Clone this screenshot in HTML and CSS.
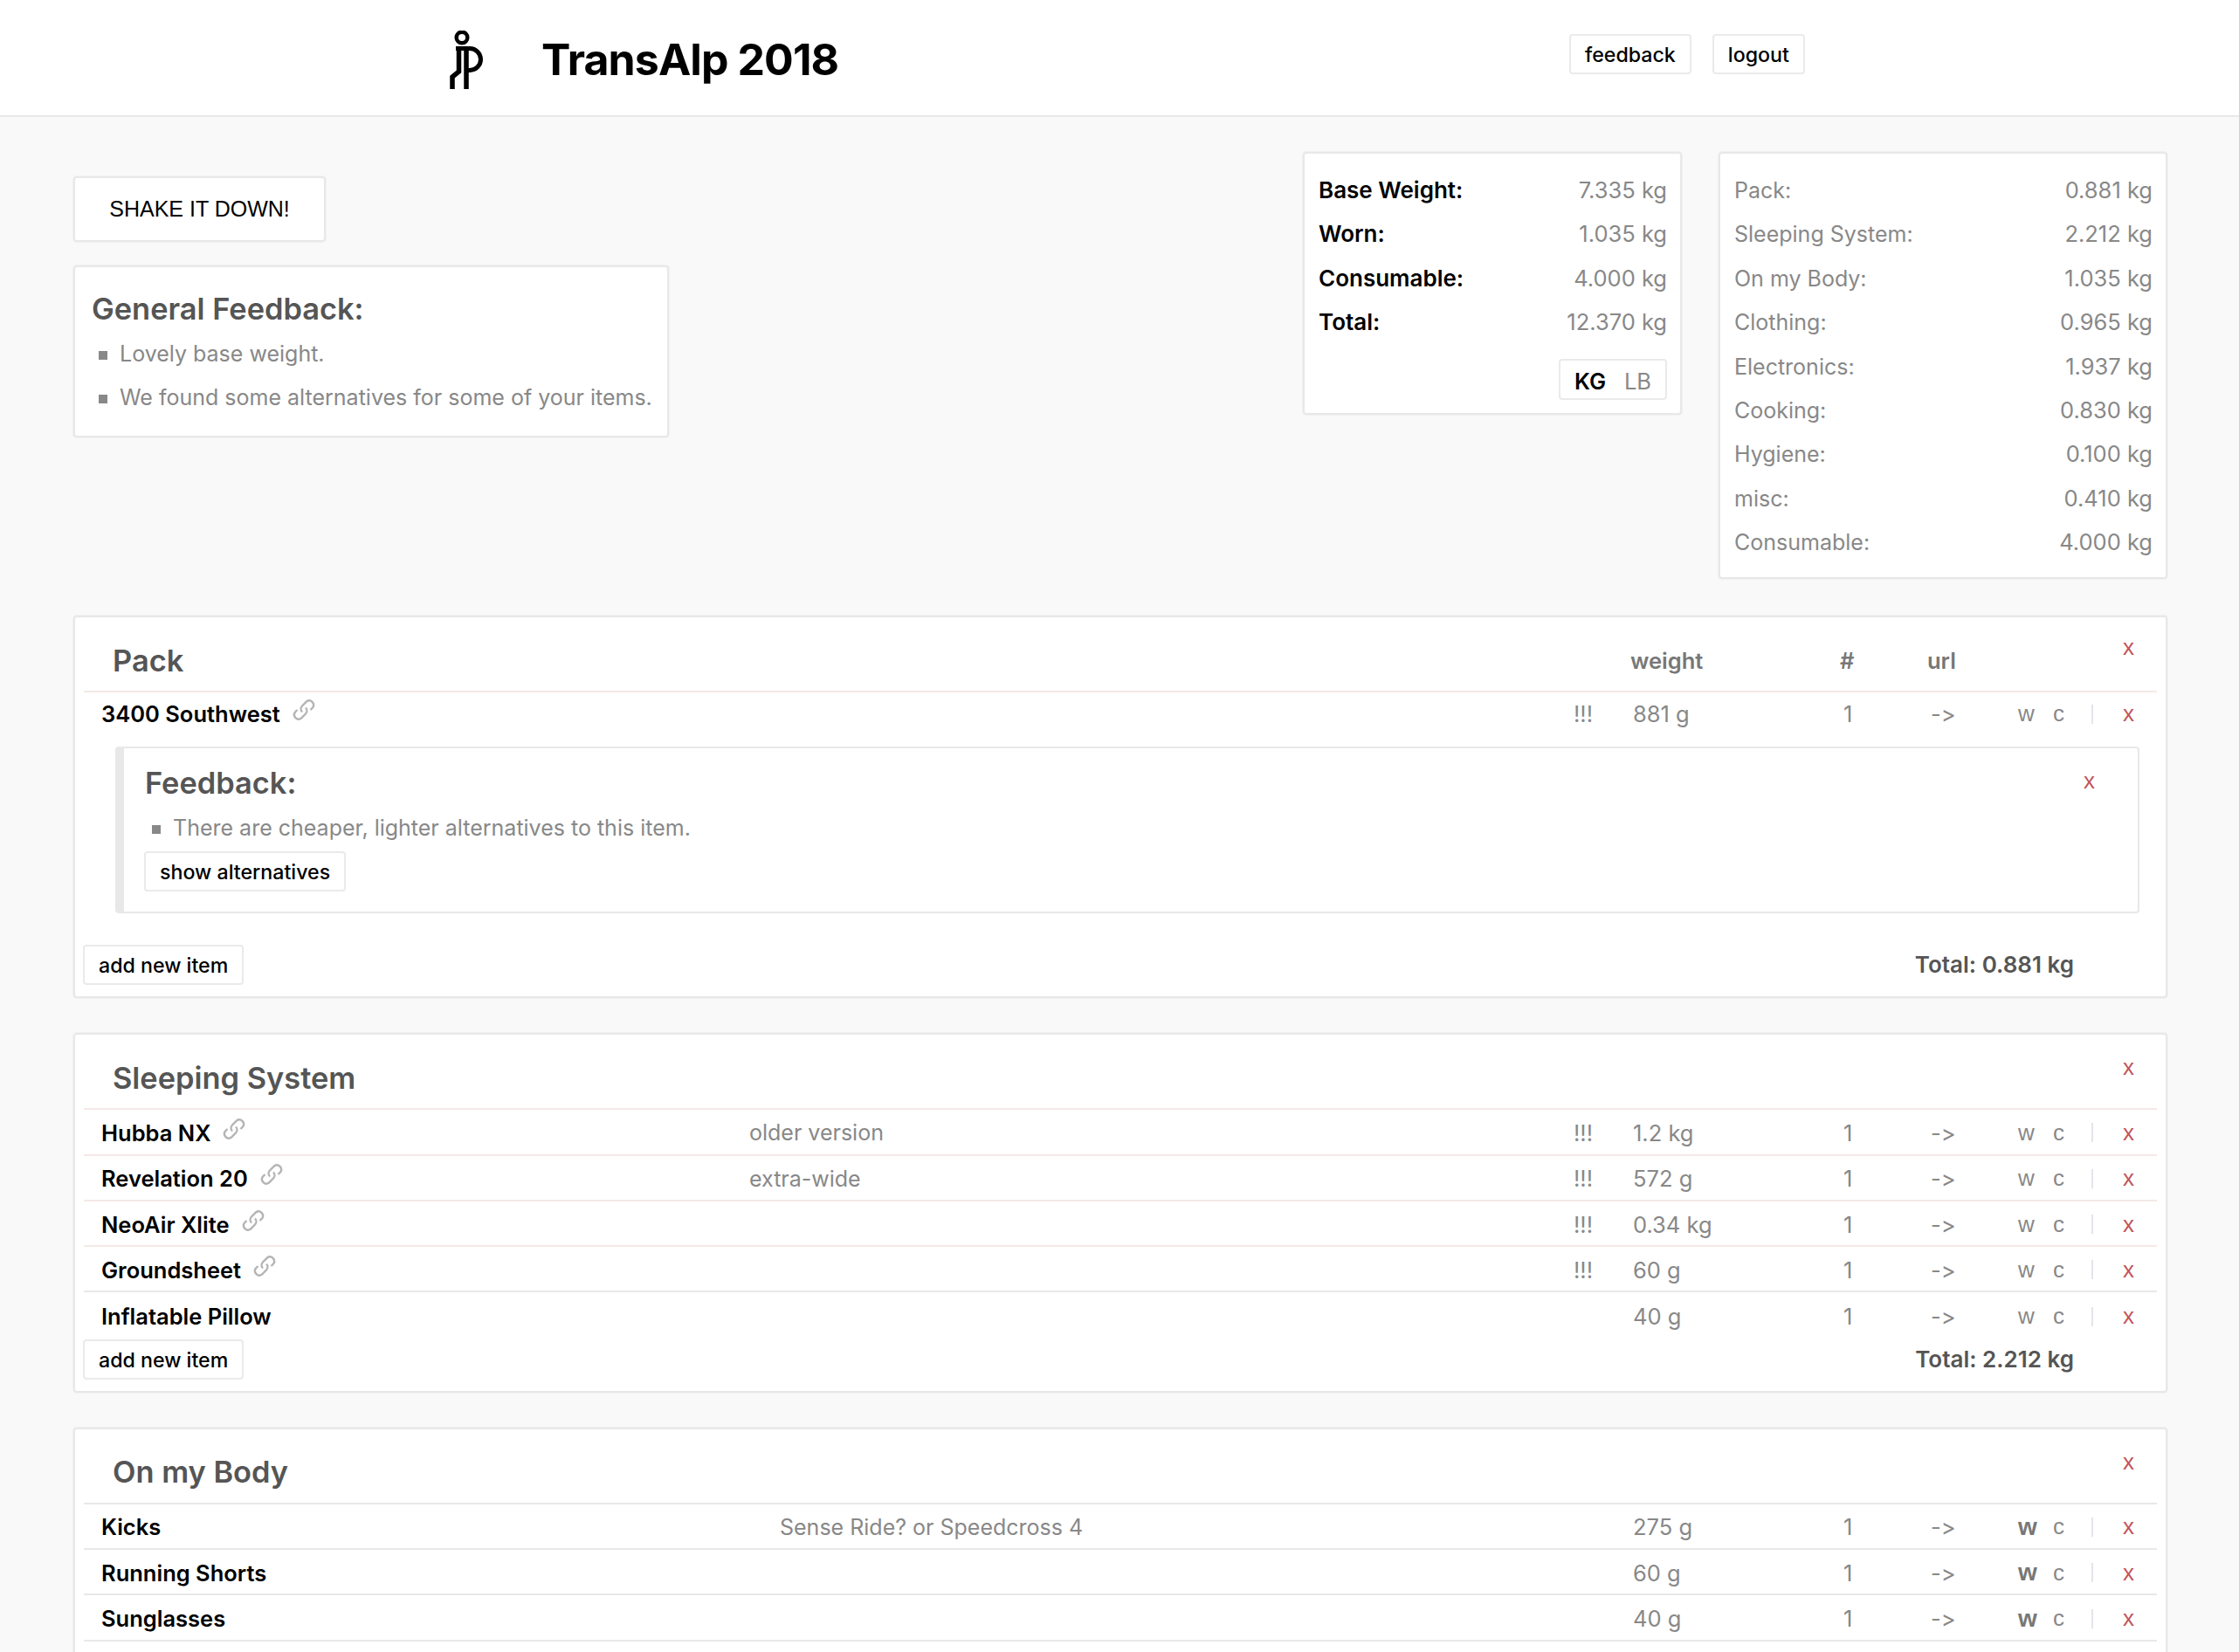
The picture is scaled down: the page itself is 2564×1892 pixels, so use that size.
FILE: index.html
```html
<!DOCTYPE html>
<html lang="en">
<head>
<meta charset="utf-8">
<title>TransAlp 2018</title>
<link rel="stylesheet" href="styles.css">
</head>
<body>
<div class="page">
  <header class="topbar">
    <div class="brand">
      <svg class="logo" viewBox="0 0 42 68" width="42" height="68" aria-hidden="true">
        <circle cx="15" cy="8" r="6.300" fill="none" stroke="#000" stroke-width="4.500"/>
        <path d="M8 20.500H24A12.500 12.500 0 0 1 24 45.500H20" fill="none" stroke="#000" stroke-width="5"/>
        <path d="M11.500 20.500V47L4 53V67" fill="none" stroke="#000" stroke-width="5.500"/>
        <path d="M20 20.500V67" fill="none" stroke="#000" stroke-width="5.500"/>
      </svg>
      <h1 class="brand-title">TransAlp 2018</h1>
    </div>
    <nav class="topnav">
      <a class="btn">feedback</a>
      <a class="btn">logout</a>
    </nav>
  </header>

  <main class="content">
    <section class="summary">
      <div class="summary-left">
        <a class="shake">SHAKE IT DOWN!</a>
        <div class="box general">
          <h2 class="heading">General Feedback:</h2>
          <ul class="notes">
            <li>Lovely base weight.</li>
            <li>We found some alternatives for some of your items.</li>
          </ul>
        </div>
      </div>
      <div class="box stats stats-main">
        <div class="stat strong"><span>Base Weight:</span><span class="val">7.335 kg</span></div>
        <div class="stat strong"><span>Worn:</span><span class="val">1.035 kg</span></div>
        <div class="stat strong"><span>Consumable:</span><span class="val">4.000 kg</span></div>
        <div class="stat strong"><span>Total:</span><span class="val">12.370 kg</span></div>
        <div class="units"><span class="unit on">KG</span><span class="unit">LB</span></div>
      </div>
      <div class="box stats stats-cats">
        <div class="stat"><span>Pack:</span><span class="val">0.881 kg</span></div>
        <div class="stat"><span>Sleeping System:</span><span class="val">2.212 kg</span></div>
        <div class="stat"><span>On my Body:</span><span class="val">1.035 kg</span></div>
        <div class="stat"><span>Clothing:</span><span class="val">0.965 kg</span></div>
        <div class="stat"><span>Electronics:</span><span class="val">1.937 kg</span></div>
        <div class="stat"><span>Cooking:</span><span class="val">0.830 kg</span></div>
        <div class="stat"><span>Hygiene:</span><span class="val">0.100 kg</span></div>
        <div class="stat"><span>misc:</span><span class="val">0.410 kg</span></div>
        <div class="stat"><span>Consumable:</span><span class="val">4.000 kg</span></div>
      </div>
    </section>

    <section class="box list">
      <a class="del del-card del-pack">x</a>
      <div class="row head">
        <h2 class="list-title">Pack</h2><span class="c-w">weight</span><span class="c-q">#</span><span class="c-u">url</span>
      </div>
      <div class="row item flat lifted">
        <span class="name">3400 Southwest<svg class="link"><use href="#chain"/></svg></span><span class="note"></span><span class="bang">!!!</span><span class="c-w">881 g</span><span class="c-q">1</span><span class="c-u">-&gt;</span><span class="w">w</span><span class="k">c</span><span class="bar"></span><a class="del">x</a>
      </div>
      <div class="feedback">
        <a class="del del-fb">x</a>
        <h2 class="heading">Feedback:</h2>
        <ul class="notes"><li>There are cheaper, lighter alternatives to this item.</li></ul>
        <a class="btn">show alternatives</a>
      </div>
      <div class="foot foot-pack"><a class="btn">add new item</a><span class="total">Total: 0.881 kg</span></div>
    </section>

    <section class="box list">
      <a class="del del-card">x</a>
      <div class="row head"><h2 class="list-title">Sleeping System</h2></div>
      <div class="row item">
        <span class="name">Hubba NX<svg class="link"><use href="#chain"/></svg></span><span class="note">older version</span><span class="bang">!!!</span><span class="c-w">1.2 kg</span><span class="c-q">1</span><span class="c-u">-&gt;</span><span class="w">w</span><span class="k">c</span><span class="bar"></span><a class="del">x</a>
      </div>
      <div class="row item">
        <span class="name">Revelation 20<svg class="link"><use href="#chain"/></svg></span><span class="note">extra-wide</span><span class="bang">!!!</span><span class="c-w">572 g</span><span class="c-q">1</span><span class="c-u">-&gt;</span><span class="w">w</span><span class="k">c</span><span class="bar"></span><a class="del">x</a>
      </div>
      <div class="row item">
        <span class="name">NeoAir Xlite<svg class="link"><use href="#chain"/></svg></span><span class="note"></span><span class="bang">!!!</span><span class="c-w">0.34 kg</span><span class="c-q">1</span><span class="c-u">-&gt;</span><span class="w">w</span><span class="k">c</span><span class="bar"></span><a class="del">x</a>
      </div>
      <div class="row item grey">
        <span class="name">Groundsheet<svg class="link"><use href="#chain"/></svg></span><span class="note"></span><span class="bang">!!!</span><span class="c-w">60 g</span><span class="c-q">1</span><span class="c-u">-&gt;</span><span class="w">w</span><span class="k">c</span><span class="bar"></span><a class="del">x</a>
      </div>
      <div class="row item flat">
        <span class="name">Inflatable Pillow</span><span class="note"></span><span class="bang"></span><span class="c-w">40 g</span><span class="c-q">1</span><span class="c-u">-&gt;</span><span class="w">w</span><span class="k">c</span><span class="bar"></span><a class="del">x</a>
      </div>
      <div class="foot"><a class="btn">add new item</a><span class="total">Total: 2.212 kg</span></div>
    </section>

    <section class="box list open-end">
      <a class="del del-card">x</a>
      <div class="row head grey"><h2 class="list-title">On my Body</h2></div>
      <div class="row item body-row grey">
        <span class="name">Kicks</span><span class="note">Sense Ride? or Speedcross 4</span><span class="bang"></span><span class="c-w">275 g</span><span class="c-q">1</span><span class="c-u">-&gt;</span><span class="w on">w</span><span class="k">c</span><span class="bar"></span><a class="del">x</a>
      </div>
      <div class="row item body-row grey">
        <span class="name">Running Shorts</span><span class="note"></span><span class="bang"></span><span class="c-w">60 g</span><span class="c-q">1</span><span class="c-u">-&gt;</span><span class="w on">w</span><span class="k">c</span><span class="bar"></span><a class="del">x</a>
      </div>
      <div class="row item body-row grey">
        <span class="name">Sunglasses</span><span class="note"></span><span class="bang"></span><span class="c-w">40 g</span><span class="c-q">1</span><span class="c-u">-&gt;</span><span class="w on">w</span><span class="k">c</span><span class="bar"></span><a class="del">x</a>
      </div>
    </section>
  </main>
</div>
<svg class="defs" aria-hidden="true">
  <symbol id="chain" viewBox="0 0 26 26">
    <path d="M11 15.500a5 5 0 0 1 0-7l5-5a5 5 0 0 1 7 7l-2.500 2.500" fill="none" stroke="currentColor" stroke-width="2.400"/>
    <path d="M15 10.500a5 5 0 0 1 0 7l-5 5a5 5 0 0 1-7-7l2.500-2.500" fill="none" stroke="currentColor" stroke-width="2.400"/>
  </symbol>
</svg>
</body>
</html>
```
FILE: styles.css
```css
* { box-sizing: border-box; }
html, body { margin: 0; padding: 0; }
body {
  background: #f9f9f9;
  color: #000;
  font-family: Inter, "Liberation Sans", sans-serif;
  font-size: 25.500px;
  font-variant-ligatures: none;
  font-feature-settings: "calt" 0, "liga" 0;
}
.page { height: 1892px; overflow: hidden; }
.defs { width: 0; height: 0; position: absolute; }
h1, h2, ul { margin: 0; padding: 0; }

.topbar {
  height: 134px;
  background: #fff;
  border-bottom: 2px solid #e8e8e8;
  display: flex;
  padding-left: 514px;
}
.brand { display: flex; width: 1283px; padding-top: 35px; }
.logo { display: block; }
.brand-title {
  margin: 3px 0 0 64px;
  font-size: 50px;
  line-height: 60px;
  font-weight: 700;
  letter-spacing: -0.900px;
}
.topnav { display: flex; gap: 24px; padding-top: 39px; align-items: flex-start; }

.btn {
  display: inline-block;
  height: 46px;
  line-height: 44px;
  padding: 0 16px;
  background: #fff;
  border: 2px solid #eaeaea;
  border-radius: 4px;
  font-size: 23.200px;
  font-weight: 500;
  color: #000;
}

.content { padding: 40px 82px 0 84px; }
.box {
  background: #fff;
  border: 2px solid #e8e8e8;
  border-radius: 4px;
  box-shadow: 0 0 0 1px #f1f1f1;
}
.summary { display: flex; align-items: flex-start; height: 531px; }
.summary-left { width: 682px; padding-top: 28px; margin-right: 726px; }
.shake {
  display: block;
  width: 289px;
  height: 75px;
  line-height: 71px;
  text-align: center;
  background: #fff;
  border: 2px solid #e8e8e8;
  border-radius: 4px;
  box-shadow: 0 0 0 1px #f1f1f1;
  font-family: "Liberation Sans", sans-serif;
  font-size: 25px;
}
.general { margin-top: 27px; height: 197px; padding: 26px 19px; }
.heading { font-size: 34.400px; line-height: 44px; font-weight: 600; color: #555; margin-bottom: 4px; }
.notes { list-style: none; color: #888; font-size: 25px; }
.notes li { position: relative; padding-left: 32px; line-height: 50px; white-space: nowrap; }
.notes li::before {
  content: "";
  position: absolute;
  left: 8px;
  top: 22px;
  width: 10px;
  height: 10px;
  background: #888;
}

.stats { padding: 17px 15px 18px 16px; }
.stats-main { width: 434px; height: 301px; margin-right: 42px; }
.stats-cats { width: 514px; height: 489px; color: #888; font-size: 25px; }
.stat { display: flex; justify-content: space-between; height: 50.400px; line-height: 50px; font-size: 26px; }
.stats-cats .stat span:first-child { font-size: 25px; }
.stat .val { color: #888; font-size: 25.500px; }
.stat.strong { font-weight: 600; }
.stat.strong .val { font-weight: 400; }
.units {
  margin: 16px 0 0 auto;
  width: 124px;
  height: 47px;
  display: flex;
  justify-content: space-between;
  padding: 0 16px;
  line-height: 47px;
  border: 2px solid #eaeaea;
  border-radius: 4px;
  color: #888;
}
.unit.on { color: #000; font-weight: 600; }

.list { position: relative; padding: 0 10px; margin-bottom: 40px; }
.list.open-end { height: 400px; margin-bottom: 0; }
.row {
  display: grid;
  grid-template-columns: 742px 944px 68px 236px 100px 105px 40px 44px 36px 26px;
  align-items: center;
  border-bottom: 2px solid #f5e8e8;
}
.row.grey { border-bottom-color: #e8e8e8; }
.row > * { display: block; }
.item { height: 52.300px; padding: 2px 0 0 20px; }
.item.flat { border-bottom: 0; }
.item.lifted { padding: 0 0 3px 20px; }
.item.body-row { grid-template-columns: 777px 909px 68px 236px 100px 105px 40px 44px 36px 26px; }
.head {
  height: 86px;
  padding-top: 15px;
  display: flex;
  position: relative;
}
.list-title {
  margin-left: 33px;
  font-size: 34.400px;
  font-weight: 600;
  line-height: 66px;
  color: #555;
}
.head span { position: absolute; top: 22px; line-height: 56px; color: #777; font-weight: 600; }
.head .c-w { left: 1771px; }
.head .c-q { left: 2006px; }
.head .c-u { left: 2106px; }
.name { font-weight: 600; display: flex; align-items: flex-start; }
.link { width: 26px; height: 26px; margin: -2px 0 0 14px; color: #b4b4b4; }
.note, .bang, .c-w, .c-q, .c-u, .w, .k { color: #888; }
.note { font-size: 25px; }
.c-q { padding-left: 5px; }
.c-u { padding-left: 5px; }
.w, .k, .del { font-family: "Liberation Sans", sans-serif; font-size: 26px; }
.w.on { font-weight: 700; font-size: 28px; color: #777; }
.bar { width: 2px; height: 22px; background: #e4e4ea; }
.del { color: #c2555a; }
.del-card { position: absolute; right: 36px; top: 15px; line-height: 44px; }
.del-pack { top: 12px; }
.del-fb { position: absolute; right: 49px; top: 15px; line-height: 44px; }

.feedback {
  position: relative;
  margin: 10px 20px 0 36px;
  height: 191px;
  padding: 17px 24px 0;
  border: 2px solid #e8e8e8;
  border-left-width: 10px;
  border-radius: 4px;
}
.feedback .heading { line-height: 46px; margin-bottom: 3px; }
.feedback .btn { margin: 2px 0 0 -1px; }

.foot {
  display: flex;
  justify-content: space-between;
  align-items: flex-start;
  padding: 1px 95px 0 0;
  height: 60px;
}
.foot-pack { margin-top: 35px; }
.foot .btn { margin-left: -1px; }
.total { font-weight: 600; color: #555; font-size: 26px; line-height: 46px; }
```
